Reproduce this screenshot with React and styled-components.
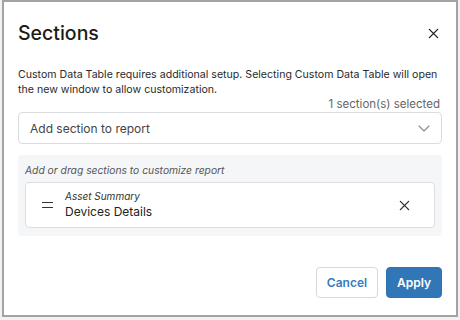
import React from 'react';
import styled, { createGlobalStyle } from 'styled-components';

const Global = createGlobalStyle`
  body {
    margin: 0;
    background: #f1f1f1;
    font-family: Inter, "Noto Sans", sans-serif;
  }
`;

const XIcon = ({ size = 12, stroke = '#333' }) => (
  <svg width={size} height={size} viewBox="0 0 12 12">
    <path d="M1.5 1.5 L10.5 10.5 M10.5 1.5 L1.5 10.5" stroke={stroke} strokeWidth="1.5" strokeLinecap="round" />
  </svg>
);

const Chevron = () => (
  <svg width="12" height="7" viewBox="0 0 12 7">
    <path d="M1 1 L6 6 L11 1" fill="none" stroke="#8a8a8a" strokeWidth="1.1" strokeLinecap="round" strokeLinejoin="round" />
  </svg>
);

const App = () => {
  return (
    <>
      <Global />
      <Page>
        <Dialog>
          <Header>
            <Title>Sections</Title>
            <IconButton aria-label="close"><XIcon size={11} stroke="#222" /></IconButton>
          </Header>
          <Description>
            Custom Data Table requires additional setup. Selecting Custom Data Table will open
            the new window to allow customization.
          </Description>
          <Count>1 section(s) selected</Count>
          <Select>
            <span>Add section to report</span>
            <Chevron />
          </Select>
          <Panel>
            <Hint>Add or drag sections to customize report</Hint>
            <Card>
              <Handle>
                <span />
                <span />
              </Handle>
              <CardText>
                <Category>Asset Summary</Category>
                <Name>Devices Details</Name>
              </CardText>
              <IconButton aria-label="remove"><XIcon size={11} stroke="#333" /></IconButton>
            </Card>
          </Panel>
          <Footer>
            <Button>Cancel</Button>
            <Button $primary>Apply</Button>
          </Footer>
        </Dialog>
      </Page>
    </>
  );
};

export default App;

const Page = styled.div`
  width: 460px;
  height: 320px;
  padding: 0 2px;
  box-sizing: border-box;
`;

const Dialog = styled.div`
  height: 317px;
  box-sizing: border-box;
  background: #fff;
  border: 2px solid #a3a3a3;
  padding: 0 14px;
  display: flex;
  flex-direction: column;
  color: #222;
`;

const Header = styled.div`
  display: flex;
  justify-content: space-between;
  align-items: center;
  margin-top: 18px;
`;

const Title = styled.h1`
  margin: 0;
  font-size: 19.5px;
  line-height: 26px;
  font-weight: 500;
  color: #1c1c1c;
`;

const IconButton = styled.button`
  border: none;
  background: none;
  padding: 0;
  display: flex;
  align-items: center;
  justify-content: center;
  width: 18px;
  height: 18px;
  cursor: pointer;
`;

const Description = styled.p`
  margin: 21px 0 0;
  font-size: 10.6px;
  line-height: 15px;
  color: #2a2a2a;
`;

const Count = styled.div`
  text-align: right;
  font-size: 11.5px;
  line-height: 14px;
  color: #666;
  padding-right: 2px;
`;

const Select = styled.div`
  margin-top: 1px;
  height: 32px;
  box-sizing: border-box;
  border: 1px solid #d9dbde;
  border-radius: 4px;
  display: flex;
  align-items: center;
  justify-content: space-between;
  padding: 0 11px 0 11px;
  font-size: 12px;
  color: #444;
`;

const Panel = styled.div`
  margin-top: 11px;
  background: #f5f6f8;
  border-radius: 4px;
  padding: 8px 7px 8px;
`;

const Hint = styled.div`
  font-size: 10.3px;
  line-height: 14px;
  font-style: italic;
  color: #555;
`;

const Card = styled.div`
  margin-top: 5px;
  height: 46px;
  box-sizing: border-box;
  background: #fff;
  border: 1px solid #dcdee2;
  border-radius: 4px;
  display: flex;
  align-items: center;
  padding: 0 21px 0 16px;
`;

const Handle = styled.div`
  width: 11px;
  display: flex;
  flex-direction: column;
  gap: 3.5px;
  margin-right: 12px;
  span {
    display: block;
    height: 1.5px;
    background: #333;
  }
`;

const CardText = styled.div`
  flex: 1;
  display: flex;
  flex-direction: column;
`;

const Category = styled.span`
  font-size: 10px;
  line-height: 13px;
  font-style: italic;
  color: #333;
`;

const Name = styled.span`
  font-size: 12px;
  line-height: 17px;
  color: #222;
`;

const Footer = styled.div`
  margin-top: auto;
  margin-bottom: 17px;
  display: flex;
  justify-content: flex-end;
  gap: 8px;
`;

const Button = styled.button`
  height: 31px;
  padding: 0;
  border-radius: 4px;
  font-family: Inter, "Noto Sans", sans-serif;
  font-size: 12px;
  font-weight: 600;
  cursor: pointer;
  border: 1px solid ${p => (p.$primary ? '#2f74b5' : '#d6d9dd')};
  background: ${p => (p.$primary ? '#3177b7' : '#fff')};
  color: ${p => (p.$primary ? '#fff' : '#3a7bbf')};
  width: ${p => (p.$primary ? '56px' : '62px')};
`;
